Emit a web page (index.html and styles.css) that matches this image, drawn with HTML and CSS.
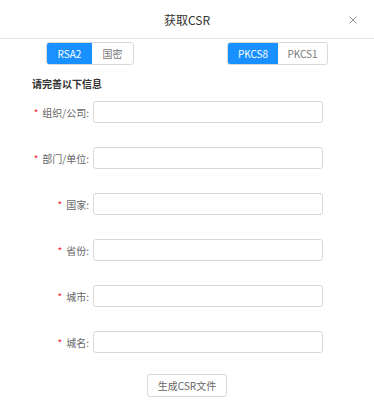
FILE: index.html
```html
<!DOCTYPE html>
<html lang="zh">
<head>
    <meta charset="UTF-8">
    <meta name="viewport" content="width=device-width, initial-scale=1.0">
    <title>获取CSR</title>
    <link rel="stylesheet" href="styles.css">
</head>
<body>
    <div class="dialog">
        <div class="dialog-header">
            <span></span>
            <h1>获取CSR</h1>
            <span class="close">
                <svg width="8" height="8" viewBox="0 0 8 8"><path d="M0.5 0.5L7.5 7.5M7.5 0.5L0.5 7.5" stroke="#999" stroke-width="1"/></svg>
            </span>
        </div>
        <div class="toggles">
            <div class="segment algo">
                <span class="seg-item active">RSA2</span>
                <span class="seg-item">国密</span>
            </div>
            <div class="segment format">
                <span class="seg-item active">PKCS8</span>
                <span class="seg-item">PKCS1</span>
            </div>
        </div>
        <h2>请完善以下信息</h2>
        <div class="form">
            <label><i>*</i>组织/公司:</label><input type="text">
            <label><i>*</i>部门/单位:</label><input type="text">
            <label><i>*</i>国家:</label><input type="text">
            <label><i>*</i>省份:</label><input type="text">
            <label><i>*</i>城市:</label><input type="text">
            <label><i>*</i>城名:</label><input type="text">
        </div>
        <div class="actions">
            <button type="button">生成CSR文件</button>
        </div>
    </div>
</body>
</html>
```

FILE: styles.css
```css
body {
    margin: 0;
    padding: 0;
    background: #fff;
    font-family: "Noto Sans CJK SC", "Noto Sans", sans-serif;
    color: #666;
}
.dialog-header {
    display: grid;
    grid-template-columns: 1fr auto 1fr;
    align-items: center;
    height: 38px;
    border-bottom: 1px solid #e8e8e8;
}
.dialog-header h1 {
    margin: 0;
    font-size: 12px;
    font-weight: normal;
    color: #333;
}
.close {
    justify-self: end;
    margin-right: 17px;
    margin-top: 1px;
    display: flex;
}
.toggles {
    display: flex;
    justify-content: space-between;
    padding: 0 46px;
    margin-top: 3px;
}
.segment {
    display: flex;
    border: 1px solid #d9d9d9;
    border-radius: 3px;
    overflow: hidden;
    height: 21px;
}
.seg-item {
    display: flex;
    align-items: center;
    justify-content: center;
    font-size: 10px;
    color: #777;
}
.algo .seg-item:first-child {
    width: 45px;
}
.algo .seg-item:last-child {
    width: 41px;
}
.format .seg-item {
    width: 50px;
}
.format .seg-item:last-child {
    width: 49px;
}
.seg-item.active {
    background: #1890ff;
    color: #fff;
}
h2 {
    margin: 12px 0 0 32px;
    font-size: 10px;
    line-height: 14px;
    font-weight: bold;
    color: #333;
}
.form {
    display: grid;
    grid-template-columns: 59px 1fr;
    column-gap: 4px;
    row-gap: 24px;
    padding: 0 51px 0 30px;
    margin-top: 10px;
}
.form label {
    display: flex;
    align-items: center;
    justify-content: flex-end;
    font-size: 10px;
    color: #666;
    white-space: nowrap;
}
.form label i {
    font-style: normal;
    color: #f5222d;
    margin-right: 4px;
}
.form input {
    height: 22px;
    box-sizing: border-box;
    border: 1px solid #d9d9d9;
    border-radius: 3px;
    margin: 0;
}
.actions {
    display: flex;
    justify-content: center;
    margin-top: 21px;
}
.actions button {
    width: 80px;
    height: 23px;
    border: 1px solid #d9d9d9;
    border-radius: 3px;
    background: #fff;
    color: #666;
    font-size: 10px;
    font-family: inherit;
    padding: 0;
}
```
